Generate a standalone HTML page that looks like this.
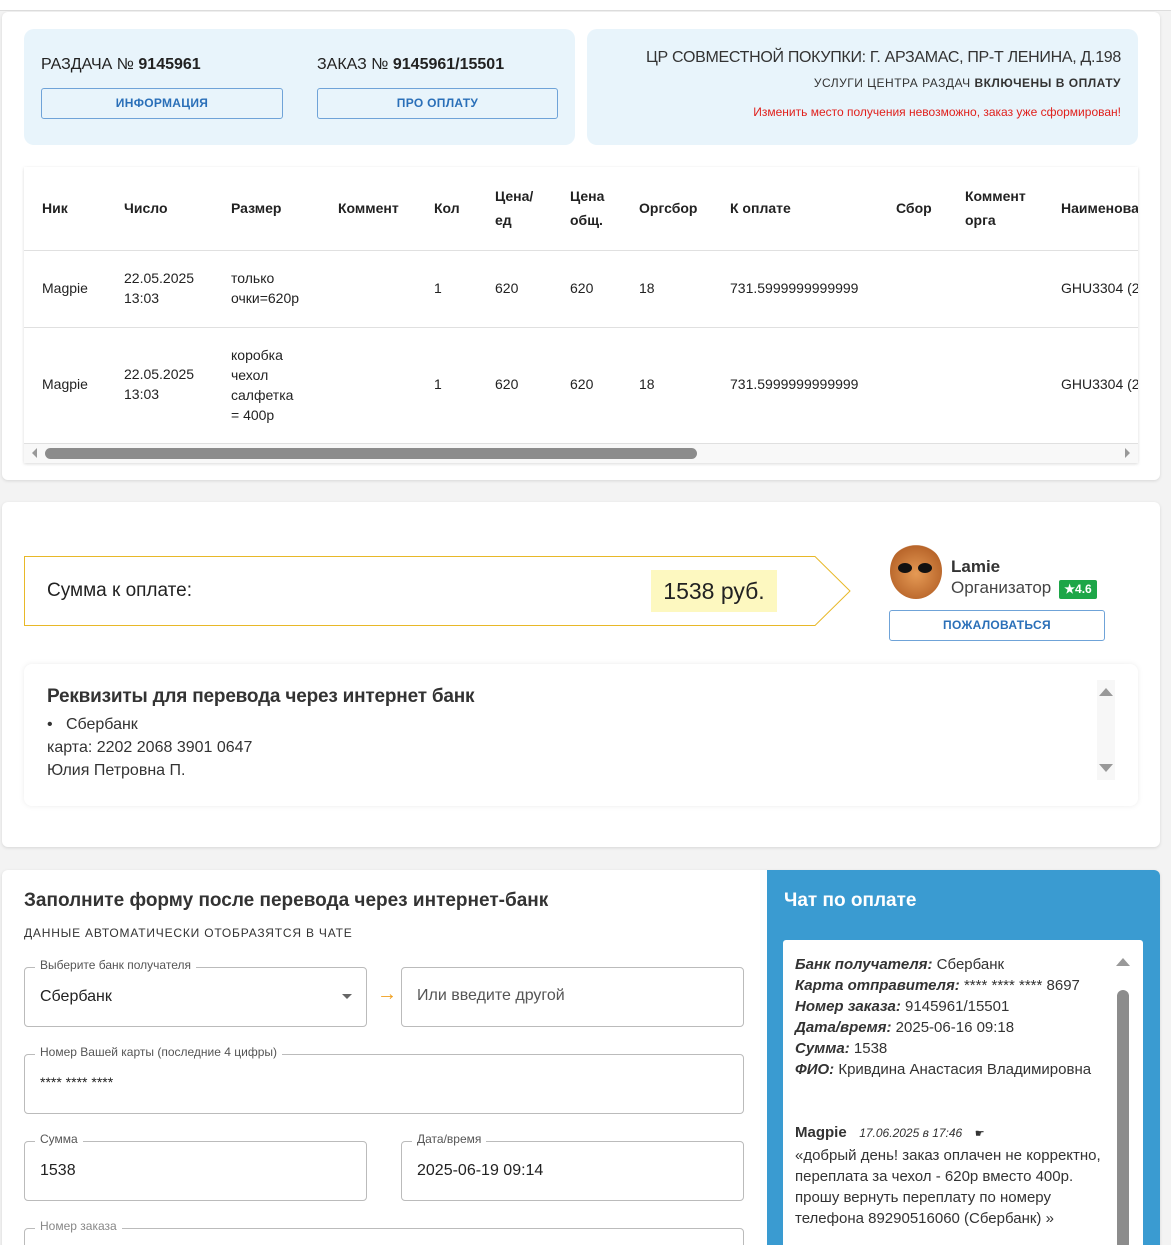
<!DOCTYPE html>
<html style="width:1171px;height:1245px;overflow:hidden"><head><meta charset="utf-8">
<style>
*{box-sizing:border-box;margin:0;padding:0}
body{width:1171px;height:1245px;overflow:hidden;background:#f3f3f3;font-family:"Liberation Sans",sans-serif;color:#222;position:relative}
.a{position:absolute}
.card{background:#fff;border-radius:6px;box-shadow:0 1px 3px rgba(0,0,0,.12)}
.btn{border:1px solid #6fa3d8;border-radius:3px;color:#2a6fb8;font-size:12px;font-weight:bold;text-align:center;line-height:28px;background:transparent;letter-spacing:.3px}
.th{font-size:14px;font-weight:bold;color:#222;line-height:24px}
.td{font-size:14px;color:#222;line-height:20px}
.fld{border:1px solid #bbb;border-radius:4px;background:#fff}
.lbl{font-size:12px;color:#555;background:#fff;padding:0 5px}
.val{font-size:16px;color:#222}
</style></head><body>
<div class="a" style="left:0;top:0;width:1171px;height:11px;background:#fff;border-bottom:1px solid #ddd"></div>
<div class="a card" style="left:2px;top:12px;width:1158px;height:468px"></div>
<div class="a" style="left:24px;top:29px;width:551px;height:116px;background:#e8f4fb;border-radius:10px"></div>
<div class="a" style="left:41px;top:56px;font-size:16px">РАЗДАЧА № <b>9145961</b></div>
<div class="a" style="left:317px;top:56px;font-size:16px">ЗАКАЗ № <b>9145961/15501</b></div>
<div class="a btn" style="left:41px;top:88px;width:242px;height:31px">ИНФОРМАЦИЯ</div>
<div class="a btn" style="left:317px;top:88px;width:241px;height:31px">ПРО ОПЛАТУ</div>
<div class="a" style="left:587px;top:29px;width:551px;height:116px;background:#e8f4fb;border-radius:10px"></div>
<div class="a" style="right:50px;top:49px;font-size:16px;color:#333;letter-spacing:-.3px">ЦР СОВМЕСТНОЙ ПОКУПКИ: Г. АРЗАМАС, ПР-Т ЛЕНИНА, Д.198</div>
<div class="a" style="right:50px;top:76px;font-size:12px;letter-spacing:.5px;color:#333">УСЛУГИ ЦЕНТРА РАЗДАЧ <b>ВКЛЮЧЕНЫ В ОПЛАТУ</b></div>
<div class="a" style="right:50px;top:105px;font-size:12px;color:#e0201c">Изменить место получения невозможно, заказ уже сформирован!</div>
<div class="a" style="left:24px;top:167px;width:1114px;height:296px;background:#fff;box-shadow:0 1px 3px rgba(0,0,0,.15);overflow:hidden">
<div class="a" style="left:0;top:83px;width:1114px;height:1px;background:#e0e0e0"></div>
<div class="a" style="left:0;top:160px;width:1114px;height:1px;background:#e0e0e0"></div>
<div class="a" style="left:0;top:276px;width:1114px;height:1px;background:#e0e0e0"></div>
<div class="a th" style="left:18px;top:29px">Ник</div>
<div class="a th" style="left:100px;top:29px">Число</div>
<div class="a th" style="left:207px;top:29px">Размер</div>
<div class="a th" style="left:314px;top:29px">Коммент</div>
<div class="a th" style="left:410px;top:29px">Кол</div>
<div class="a th" style="left:471px;top:17px">Цена/<br>ед</div>
<div class="a th" style="left:546px;top:17px">Цена<br>общ.</div>
<div class="a th" style="left:615px;top:29px">Оргсбор</div>
<div class="a th" style="left:706px;top:29px">К оплате</div>
<div class="a th" style="left:872px;top:29px">Сбор</div>
<div class="a th" style="left:941px;top:17px">Коммент<br>орга</div>
<div class="a th" style="left:1037px;top:29px;white-space:nowrap">Наименование</div>
<div class="a td" style="left:18px;top:111px">Magpie</div>
<div class="a td" style="left:100px;top:101px">22.05.2025<br>13:03</div>
<div class="a td" style="left:207px;top:101px">только<br>очки=620р</div>
<div class="a td" style="left:410px;top:111px">1</div>
<div class="a td" style="left:471px;top:111px">620</div>
<div class="a td" style="left:546px;top:111px">620</div>
<div class="a td" style="left:615px;top:111px">18</div>
<div class="a td" style="left:706px;top:111px">731.5999999999999</div>
<div class="a td" style="left:1037px;top:111px;white-space:nowrap">GHU3304 (2</div>
<div class="a td" style="left:18px;top:207px">Magpie</div>
<div class="a td" style="left:100px;top:197px">22.05.2025<br>13:03</div>
<div class="a td" style="left:207px;top:178px">коробка<br>чехол<br>салфетка<br>= 400р</div>
<div class="a td" style="left:410px;top:207px">1</div>
<div class="a td" style="left:471px;top:207px">620</div>
<div class="a td" style="left:546px;top:207px">620</div>
<div class="a td" style="left:615px;top:207px">18</div>
<div class="a td" style="left:706px;top:207px">731.5999999999999</div>
<div class="a td" style="left:1037px;top:207px;white-space:nowrap">GHU3304 (2</div>
<div class="a" style="left:0;top:277px;width:1114px;height:19px;background:#f8f8f8"></div>
<div class="a" style="left:8px;top:281px;width:0;height:0;border-top:5px solid transparent;border-bottom:5px solid transparent;border-right:5px solid #999"></div>
<div class="a" style="left:1101px;top:281px;width:0;height:0;border-top:5px solid transparent;border-bottom:5px solid transparent;border-left:5px solid #999"></div>
<div class="a" style="left:21px;top:281px;width:652px;height:11px;background:#8c8c8c;border-radius:6px"></div>
</div>
<div class="a card" style="left:2px;top:502px;width:1158px;height:345px"></div>
<svg class="a" style="left:24px;top:556px" width="830" height="72"><polygon points="0.5,0.5 791,0.5 826,35 791,69.5 0.5,69.5" fill="#fff" stroke="#e8b828" stroke-width="1"/></svg>
<div class="a" style="left:47px;top:580px;font-size:19px;color:#222">Сумма к оплате:</div>
<div class="a" style="left:651px;top:570px;width:126px;height:42px;background:#fdf8c0;font-size:23px;line-height:42px;text-align:center;color:#222">1538 руб.</div>
<div class="a" style="left:890px;top:543px;width:52px;height:56px;border-radius:50%;background:radial-gradient(circle at 50% 55%,#e59a55,#b8652a 70%,#fff 72%)"></div>
<div class="a" style="left:898px;top:563px;width:14px;height:10px;border-radius:50%;background:#111"></div>
<div class="a" style="left:918px;top:563px;width:14px;height:10px;border-radius:50%;background:#111"></div>
<div class="a" style="left:951px;top:557px;font-size:17px;font-weight:bold;color:#333">Lamie</div>
<div class="a" style="left:951px;top:578px;font-size:17px;color:#444">Организатор</div>
<div class="a" style="left:1059px;top:580px;width:38px;height:19px;background:#1da648;border-radius:2px;color:#fff;font-size:12px;font-weight:bold;line-height:19px;text-align:center">★4.6</div>
<div class="a btn" style="left:889px;top:610px;width:216px;height:31px">ПОЖАЛОВАТЬСЯ</div>
<div class="a" style="left:24px;top:664px;width:1114px;height:142px;background:#fff;border-radius:8px;box-shadow:0 0 6px rgba(0,0,0,.08)"></div>
<div class="a" style="left:47px;top:686px;font-size:19px;font-weight:bold;color:#333;letter-spacing:-.2px">Реквизиты для перевода через интернет банк</div>
<div class="a" style="left:47px;top:713px;font-size:16px;line-height:23px;color:#333">•&nbsp;&nbsp; Сбербанк<br>карта: 2202 2068 3901 0647<br>Юлия Петровна П.</div>
<div class="a" style="left:1097px;top:680px;width:18px;height:100px;background:#f7f7f7"></div>
<div class="a" style="left:1099px;top:688px;width:0;height:0;border-left:7px solid transparent;border-right:7px solid transparent;border-bottom:8px solid #999"></div>
<div class="a" style="left:1099px;top:764px;width:0;height:0;border-left:7px solid transparent;border-right:7px solid transparent;border-top:8px solid #999"></div>
<div class="a card" style="left:2px;top:870px;width:1158px;height:380px"></div>
<div class="a" style="left:24px;top:890px;font-size:19px;font-weight:bold;color:#333">Заполните форму после перевода через интернет-банк</div>
<div class="a" style="left:24px;top:926px;font-size:12px;letter-spacing:.8px;color:#333">ДАННЫЕ АВТОМАТИЧЕСКИ ОТОБРАЗЯТСЯ В ЧАТЕ</div>
<div class="a fld" style="left:24px;top:967px;width:343px;height:60px"></div>
<div class="a lbl" style="left:35px;top:958px">Выберите банк получателя</div>
<div class="a val" style="left:40px;top:988px">Сбербанк</div>
<div class="a" style="left:342px;top:994px;border-left:5px solid transparent;border-right:5px solid transparent;border-top:5px solid #666"></div>
<div class="a" style="left:377px;top:983px;font-size:20px;color:#f0a020;font-weight:bold">→</div>
<div class="a fld" style="left:401px;top:967px;width:343px;height:60px"></div>
<div class="a val" style="left:417px;top:987px;color:#555">Или введите другой</div>
<div class="a fld" style="left:24px;top:1054px;width:720px;height:60px"></div>
<div class="a lbl" style="left:35px;top:1045px">Номер Вашей карты (последние 4 цифры)</div>
<div class="a" style="left:40px;top:1074px;font-size:14px">**** **** ****</div>
<div class="a fld" style="left:24px;top:1141px;width:343px;height:60px"></div>
<div class="a lbl" style="left:35px;top:1132px">Сумма</div>
<div class="a val" style="left:40px;top:1162px">1538</div>
<div class="a fld" style="left:401px;top:1141px;width:343px;height:60px"></div>
<div class="a lbl" style="left:412px;top:1132px">Дата/время</div>
<div class="a val" style="left:417px;top:1162px">2025-06-19 09:14</div>
<div class="a fld" style="left:24px;top:1228px;width:720px;height:60px"></div>
<div class="a lbl" style="left:35px;top:1219px;color:#888">Номер заказа</div>
<div class="a" style="left:767px;top:870px;width:393px;height:375px;background:#3a9bd1;border-radius:0 6px 0 0"></div>
<div class="a" style="left:784px;top:890px;font-size:19px;font-weight:bold;color:#fff">Чат по оплате</div>
<div class="a" style="left:783px;top:940px;width:360px;height:310px;background:#fff;border-radius:3px;overflow:hidden">
<div class="a" style="left:12px;top:14px;width:325px;font-size:15px;line-height:21px;color:#333">
<b><i>Банк получателя:</i></b> Сбербанк<br><b><i>Карта отправителя:</i></b> **** **** **** 8697<br><b><i>Номер заказа:</i></b> 9145961/15501<br><b><i>Дата/время:</i></b> 2025-06-16 09:18<br><b><i>Сумма:</i></b> 1538<br><b><i>ФИО:</i></b> Кривдина Анастасия Владимировна
</div>
<div class="a" style="left:12px;top:182px;width:322px;font-size:15px;line-height:21px;color:#333"><b>Magpie</b>&nbsp;&nbsp; <i style="font-size:12px">17.06.2025 в 17:46</i> &nbsp;&nbsp;<span style="font-size:11px">☛</span><br>«добрый день! заказ оплачен не корректно, переплата за чехол - 620р вместо 400р. прошу вернуть переплату по номеру телефона 89290516060 (Сбербанк) »</div>
<div class="a" style="left:333px;top:18px;border-left:7px solid transparent;border-right:7px solid transparent;border-bottom:8px solid #999"></div>
<div class="a" style="left:334px;top:50px;width:12px;height:260px;background:#8c8c8c;border-radius:6px"></div>
</div>
</body></html>
